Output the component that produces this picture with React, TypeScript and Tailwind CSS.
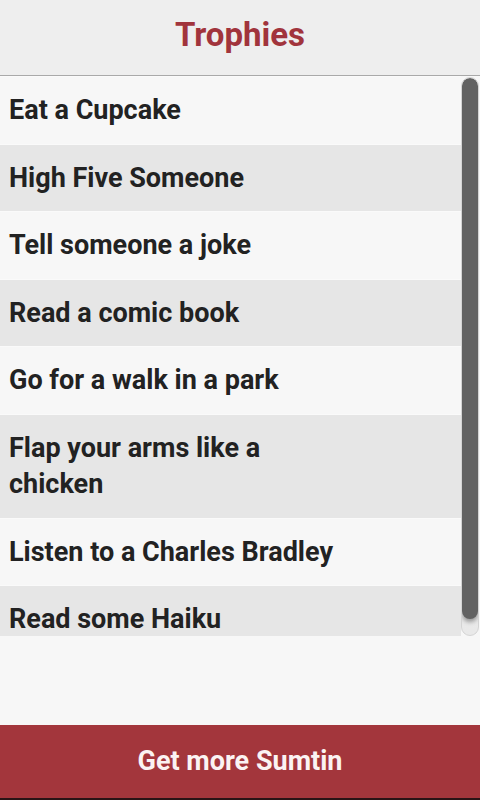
import React from "react";

const items = [
  "Eat a Cupcake",
  "High Five Someone",
  "Tell someone a joke",
  "Read a comic book",
  "Go for a walk in a park",
  "Flap your arms like a chicken",
  "Listen to a Charles Bradley",
  "Read some Haiku",
];

export default function App() {
  return (
    <div
      className="w-[480px] h-[800px] flex flex-col bg-[#f7f7f7] overflow-hidden"
      style={{ fontFamily: "Roboto, 'Noto Sans', sans-serif" }}
    >
      <div className="h-[76px] shrink-0 bg-[#eeeeee] border-b border-[#a9a9a9] flex items-center justify-center">
        <span className="text-[33px] font-bold text-[#a1343c] leading-none pb-[6px]">Trophies</span>
      </div>
      <div className="relative h-[560px] shrink-0 overflow-hidden bg-[#f7f7f7]">
        <div className="w-[461px] flex flex-col">
          {items.map((t, i) => (
            <div
              key={i}
              className={`${i % 2 === 0 ? "bg-[#f7f7f7]" : "bg-[#e6e6e6]"} border-t border-[#fafafa] pl-[9px] py-[15px]`}
            >
              <div className="w-[336px] text-[27px] font-bold text-[#222222] leading-[36.5px]">{t}</div>
            </div>
          ))}
        </div>
        <div className="absolute left-[461px] top-[1px] w-[18px] h-[559px] rounded-full bg-gradient-to-b from-[#fafafa] to-[#e9e9e9] border border-[#d4d4d4] overflow-hidden">
          <div className="h-[541px] w-full rounded-full bg-[#626262] shadow-[0_3px_4px_rgba(0,0,0,0.35)]" />
        </div>
      </div>
      <div className="flex-1" />
      <div className="h-[75px] shrink-0 bg-[#a3363c] flex items-center justify-center border-b-2 border-[#2a1416]">
        <span className="text-[27px] font-bold text-[#fbf3f3] leading-none">Get more Sumtin</span>
      </div>
    </div>
  );
}
